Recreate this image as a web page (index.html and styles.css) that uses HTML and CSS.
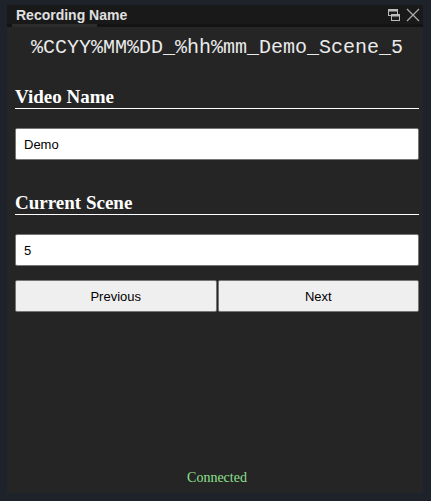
FILE: index.html
```html
<!DOCTYPE html>
<html>
<head>
<meta charset="utf-8">
<link rel="stylesheet" href="styles.css">
</head>
<body>
<div class="panel">
  <div class="titlebar">
    <span class="title">Recording Name</span>
    <div class="controls">
      <svg class="icon" width="14" height="14" viewBox="0 0 14 14">
        <rect x="1.5" y="1.5" width="9" height="6" fill="none" stroke="#bbb" stroke-width="1"/>
        <rect x="1.5" y="1.5" width="9" height="2" fill="#bbb"/>
        <rect x="4.5" y="6.5" width="8" height="6" fill="#1a1a1a" stroke="#bbb" stroke-width="1"/>
        <rect x="4.5" y="6.5" width="8" height="2" fill="#bbb"/>
      </svg>
      <svg class="icon" width="16" height="16" viewBox="0 0 16 16">
        <path d="M2 2 L14 14 M14 2 L2 14" stroke="#aaa" stroke-width="1.3" fill="none"/>
      </svg>
    </div>
  </div>
  <div class="tabline"><span class="tabmark"></span></div>
  <div class="content">
    <div class="filename">%CCYY%MM%DD_%hh%mm_Demo_Scene_5</div>
    <h2 class="heading">Video Name</h2>
    <input class="field" type="text" value="Demo">
    <h2 class="heading">Current Scene</h2>
    <input class="field" type="text" value="5">
    <div class="buttons">
      <button class="btn">Previous</button>
      <button class="btn">Next</button>
    </div>
    <div class="spacer"></div>
    <div class="status">Connected</div>
  </div>
</div>
</body>
</html>
```
FILE: styles.css
```css
html, body {
  margin: 0;
  padding: 0;
  height: 100%;
  background: #1e232b;
  overflow: hidden;
}
body {
  padding: 5px 8px 8px 7px;
  box-sizing: border-box;
}
.panel {
  height: 100%;
  background: #252525;
  display: flex;
  flex-direction: column;
}
.titlebar {
  height: 19px;
  background: #191919;
  display: flex;
  align-items: center;
  justify-content: space-between;
  padding-left: 9px;
  padding-right: 2px;
}
.title {
  font-family: "Liberation Sans", Arial, sans-serif;
  font-weight: bold;
  font-size: 14px;
  color: #e0e0e0;
}
.controls {
  display: flex;
  align-items: center;
  gap: 4px;
}
.icon {
  display: block;
}
.tabline {
  height: 3px;
  background: #131313;
  padding-left: 5px;
}
.tabmark {
  display: block;
  width: 85px;
  height: 3px;
  background: #2c2c2c;
}
.content {
  flex: 1;
  display: flex;
  flex-direction: column;
  padding: 0 4px 0 8px;
}
.filename {
  font-family: "Liberation Mono", "Courier New", monospace;
  font-size: 20px;
  color: #eaeaea;
  text-align: center;
  margin-top: 9px;
  line-height: 23px;
}
.heading {
  font-family: "Liberation Serif", "Times New Roman", serif;
  font-weight: bold;
  font-size: 19px;
  color: #ffffff;
  margin: 0;
  line-height: 22px;
  border-bottom: 1px solid #ffffff;
  padding-bottom: 0;
}
.filename + .heading {
  margin-top: 27px;
}
.field + .heading {
  margin-top: 32px;
}
.field {
  margin: 19px 0 0 0;
  height: 32px;
  box-sizing: border-box;
  border: 1px solid #767676;
  border-radius: 2px;
  background: #fff;
  padding: 0 8px;
  font-family: "Liberation Sans", Arial, sans-serif;
  font-size: 13px;
  color: #000;
  outline: none;
}
.buttons {
  margin-top: 14px;
  display: flex;
  gap: 1px;
}
.btn {
  flex: 1;
  height: 32px;
  background: #efefef;
  border: 1px solid #767676;
  border-radius: 2px;
  font-family: "Liberation Sans", Arial, sans-serif;
  font-size: 13px;
  color: #000;
  padding: 0;
}
.spacer {
  flex: 1;
}
.status {
  font-family: "Liberation Serif", "Times New Roman", serif;
  font-size: 14px;
  color: #8ee08e;
  text-align: center;
  margin-bottom: 7px;
}
```
